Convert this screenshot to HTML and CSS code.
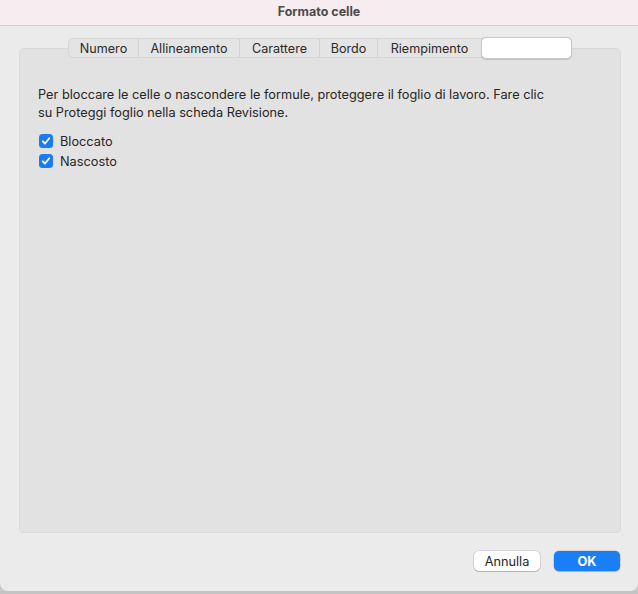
FILE: index.html
```html
<!DOCTYPE html>
<html lang="it">
<head>
<meta charset="utf-8">
<title>Formato celle</title>
<link rel="stylesheet" href="styles.css">
</head>
<body>
<div class="window">
  <div class="titlebar">Formato celle</div>
  <div class="content">
    <div class="tabs">
      <div class="tab">Numero</div>
      <div class="tab">Allineamento</div>
      <div class="tab">Carattere</div>
      <div class="tab">Bordo</div>
      <div class="tab">Riempimento</div>
      <div class="tab selected"></div>
    </div>
    <div class="panel">
      <p class="info">Per bloccare le celle o nascondere le formule, proteggere il foglio di lavoro. Fare clic<br>su Proteggi foglio nella scheda Revisione.</p>
      <label class="check"><span class="box"><svg width="10" height="10" viewBox="0 0 10 10"><path d="M1.8 5.3 L4 7.5 L8.3 2.3" fill="none" stroke="#fff" stroke-width="1.8" stroke-linecap="round" stroke-linejoin="round"/></svg></span>Bloccato</label>
      <label class="check"><span class="box"><svg width="10" height="10" viewBox="0 0 10 10"><path d="M1.8 5.3 L4 7.5 L8.3 2.3" fill="none" stroke="#fff" stroke-width="1.8" stroke-linecap="round" stroke-linejoin="round"/></svg></span>Nascosto</label>
    </div>
    <div class="footer">
      <button class="btn">Annulla</button>
      <button class="btn primary">OK</button>
    </div>
  </div>
</div>
<div class="under"></div>
</body>
</html>
```
FILE: styles.css
```css
html, body {
  margin: 0;
  padding: 0;
  background: #c9c9c9;
}
body {
  width: 638px;
  height: 594px;
  overflow: hidden;
  font-family: Inter, "Liberation Sans", sans-serif;
  font-size: 13px;
  color: #262626;
}
.window {
  height: 591px;
  background: #ebebeb;
  border-radius: 0 0 8px 8px;
  overflow: hidden;
  display: flex;
  flex-direction: column;
}
.titlebar {
  height: 26px;
  flex: none;
  box-sizing: border-box;
  background: #f7edf0;
  border-bottom: 1px solid #cfcfcf;
  text-align: center;
  font-weight: 700;
  font-size: 12.5px;
  color: #4b4b4b;
  line-height: 24px;
}
.content {
  flex: 1;
  display: flex;
  flex-direction: column;
  padding: 12px 17px 0 19px;
}
.tabs {
  align-self: center;
  display: flex;
  height: 20px;
  position: relative;
  z-index: 1;
  margin-bottom: -10px;
  background: #e4e4e4;
  border: 1px solid #d6d6d6;
  border-radius: 5px;
  box-sizing: border-box;
  margin-left: 50px;
  margin-right: 50px;
}
.tab {
  display: flex;
  align-items: center;
  justify-content: center;
  font-size: 12.6px;
  color: #2a2a2a;
  border-right: 1px solid #d2d2d2;
  height: 100%;
  box-sizing: border-box;
}
.tab:nth-child(1) { width: 70px; }
.tab:nth-child(2) { width: 101px; }
.tab:nth-child(3) { width: 80px; }
.tab:nth-child(4) { width: 58px; }
.tab:nth-child(5) { width: 103px; border-right: none; }
.tab.selected {
  width: 91px;
  height: 22px;
  margin: -2px -1px -1px 0;
  background: #ffffff;
  border: 1px solid #c8c8c8;
  border-radius: 5px;
  box-shadow: 0 0.5px 1px rgba(0,0,0,0.15);
}
.panel {
  height: 485px;
  box-sizing: border-box;
  background: #e2e2e2;
  border: 1px solid #d9d9d9;
  border-radius: 5px;
  padding: 37px 18px 0 18px;
  display: flex;
  flex-direction: column;
}
.info {
  margin: 0 0 9px 0;
  line-height: 18px;
  font-size: 12.75px;
}
.check {
  display: flex;
  align-items: center;
  height: 20px;
  font-size: 12.75px;
}
.box {
  width: 14px;
  height: 14px;
  border-radius: 3.5px;
  background: #1a7cf5;
  margin: 0 7px 0 1px;
  display: flex;
  align-items: center;
  justify-content: center;
}
.footer {
  display: flex;
  justify-content: flex-end;
  gap: 14px;
  padding: 18px 1px 0 0;
}
.btn {
  width: 66px;
  height: 20px;
  border-radius: 5px;
  border: none;
  font-family: Inter, "Liberation Sans", sans-serif;
  font-size: 12.75px;
  padding: 0;
  color: #262626;
  background: #ffffff;
  box-shadow: 0 0 0 0.5px rgba(0,0,0,0.2), 0 1px 1px rgba(0,0,0,0.15);
}
.btn.primary {
  background: #1a7ef7;
  color: #ffffff;
  font-weight: 700;
}
.under {
  height: 3px;
  background: #c4c4c4;
}
```
